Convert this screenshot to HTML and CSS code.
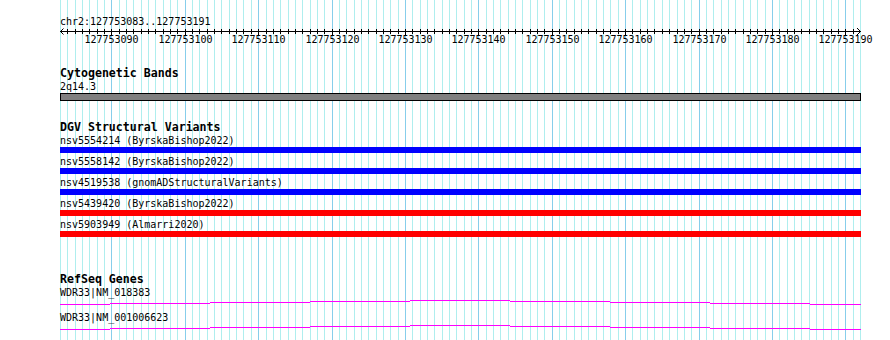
FILE: index.html
```
<!DOCTYPE html>
<html lang="en">
<head>
  <meta charset="UTF-8">
  <title>Region Details</title>
  <link rel="stylesheet" href="styles.css">
</head>
<body>
  <div class="panel">
    <!-- Grid drawn behind tracks -->
    <svg class="grid" id="grid" width="890" height="340"></svg>

    <div class="tracks">
      <div class="label chr-label">chr2:127753083..127753191</div>
      <svg class="ruler" id="ruler" width="890" height="20"></svg>

      <div class="track-title cyto-title">Cytogenetic Bands</div>
      <div class="label">2q14.3</div>
      <div class="band"></div>

      <div class="track-title dgv-title">DGV Structural Variants</div>
      <div class="label">nsv5554214 (ByrskaBishop2022)</div>
      <div class="variant gain"></div>
      <div class="label">nsv5558142 (ByrskaBishop2022)</div>
      <div class="variant gain"></div>
      <div class="label">nsv4519538 (gnomADStructuralVariants)</div>
      <div class="variant gain"></div>
      <div class="label">nsv5439420 (ByrskaBishop2022)</div>
      <div class="variant loss"></div>
      <div class="label">nsv5903949 (Almarri2020)</div>
      <div class="variant loss"></div>

      <div class="track-title gene-title">RefSeq Genes</div>
      <div class="label">WDR33|NM_018383</div>
      <svg class="gene" width="890" height="12"></svg>
      <div class="label">WDR33|NM_001006623</div>
      <svg class="gene" width="890" height="12"></svg>
    </div>
  </div>

  <script>
    const NS = "http://www.w3.org/2000/svg";
    const start = 127753083;
    const bases = 109;
    const left = 60;
    const span = 800;

    function xFor(i) {
      return Math.round(left + i * span / bases);
    }

    function add(parent, tag, attrs, text) {
      const el = document.createElementNS(NS, tag);
      for (const k in attrs) el.setAttribute(k, attrs[k]);
      if (text) el.textContent = text;
      parent.appendChild(el);
      return el;
    }

    // grid lines, one per base, darker every 10
    const grid = document.getElementById("grid");
    for (let i = 0; i <= bases; i++) {
      const major = (start + i) % 10 === 0;
      add(grid, "rect", {
        x: xFor(i), y: 0, width: 1, height: 340,
        fill: major ? "#87ceeb" : "#afeeee"
      });
    }

    // ruler
    const ruler = document.getElementById("ruler");
    add(ruler, "rect", { x: 60, y: 3, width: 801, height: 1, fill: "#000" });
    add(ruler, "polyline", { points: "63.5,0.5 60.5,3.5 63.5,6.5", class: "arrow" });
    add(ruler, "polyline", { points: "856.5,-0.5 860.5,3.5 856.5,7.5", class: "arrow" });
    for (let i = 1; i < bases; i++) {
      const major = (start + i) % 10 === 0;
      add(ruler, "rect", { x: xFor(i), y: 1, width: 1, height: major ? 6 : 5, fill: "#000" });
      if (major) {
        add(ruler, "text", { x: xFor(i) + 0.5, y: 15, class: "tick-label" }, String(start + i));
      }
    }

    // gene models: stepped line across the region
    const stops = [60, 110, 210, 310, 410, 510, 610, 710, 810, 861];
    document.querySelectorAll(".gene").forEach(svg => {
      for (let k = 0; k < stops.length - 1; k++) {
        const y = 5 - Math.min(k, 8 - k);
        add(svg, "rect", { x: stops[k], y: y, width: stops[k + 1] - stops[k], height: 1, fill: "#ff00ff" });
      }
    });
  </script>
</body>
</html>
```

FILE: styles.css
```
body {
  margin: 0;
  background-color: #fff;
  color: #000;
  font-family: "DejaVu Sans Mono", "Liberation Mono", monospace;
  font-size: 10px;
  line-height: 13px;
}

.panel {
  position: relative;
  width: 890px;
  height: 340px;
  overflow: hidden;
}

/* Grid sits under the tracks */
.grid {
  position: absolute;
  left: 0;
  top: 0;
}

.tracks {
  position: relative;
}

.label {
  padding-left: 60px;
  height: 13px;
  white-space: nowrap;
}

.chr-label {
  padding-top: 15px;
}

.ruler,
.gene {
  display: block;
}

.arrow {
  fill: none;
  stroke: #000;
  stroke-width: 1;
}

.tick-label {
  font-family: "DejaVu Sans Mono", "Liberation Mono", monospace;
  font-size: 10px;
  text-anchor: middle;
  fill: #000;
}

.track-title {
  padding-left: 60px;
  height: 13px;
  font-weight: bold;
  font-size: 11.6px;
  white-space: nowrap;
}

.cyto-title {
  margin-top: 19px;
}

.dgv-title {
  margin-top: 20px;
}

.gene-title {
  margin-top: 36px;
}

.band {
  margin: 0 0 0 60px;
  width: 801px;
  height: 8px;
  box-sizing: border-box;
  border: 1px solid #000;
  background-color: #808080;
}

.variant {
  margin: 0 0 2px 60px;
  width: 801px;
  height: 6px;
}

.gain {
  background-color: #0000ff;
}

.loss {
  background-color: #ff0000;
}
```
